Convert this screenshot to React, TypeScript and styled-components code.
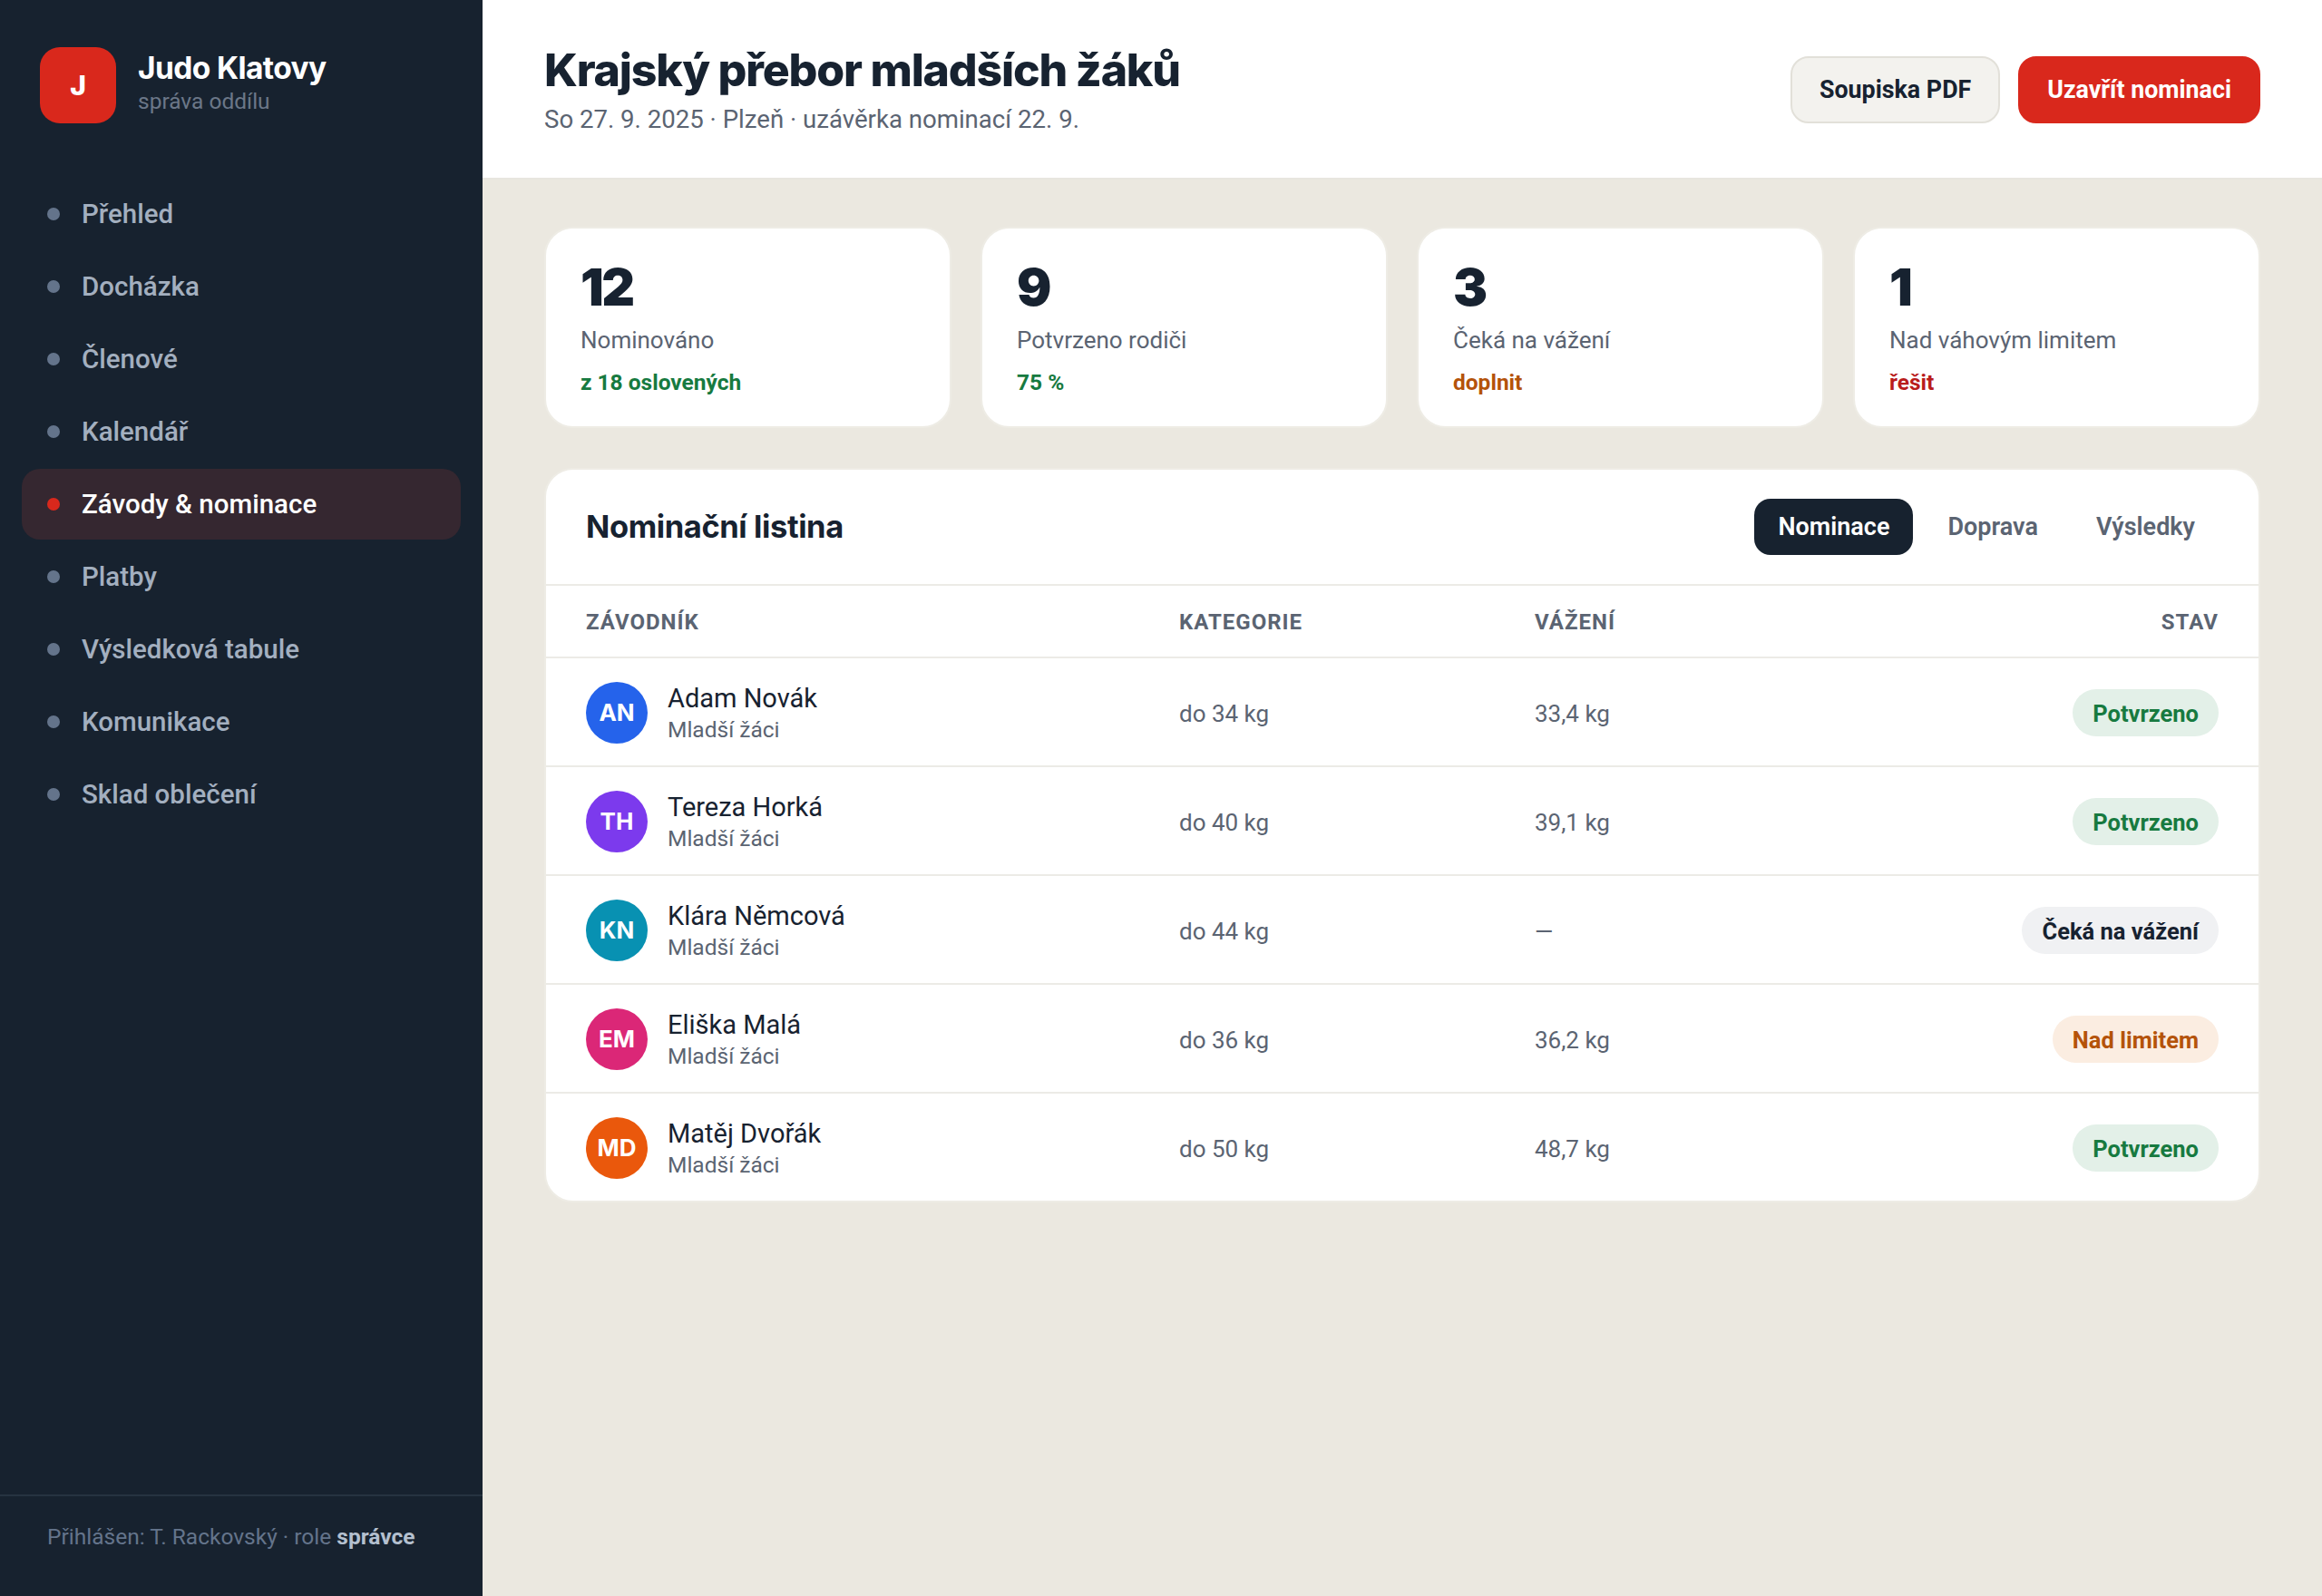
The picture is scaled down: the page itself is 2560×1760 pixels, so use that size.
import React from 'react';
import styled, { createGlobalStyle } from 'styled-components';

const GlobalStyle = createGlobalStyle`
  html, body {
    margin: 0;
    padding: 0;
    background: #ebe8e0;
  }
  * {
    box-sizing: border-box;
  }
  body {
    font-family: Roboto, "Noto Sans", sans-serif;
    color: #172230;
  }
`;

const Page = styled.div`
  display: flex;
  width: 100%;
  height: 100vh;
  min-height: 1760px;
`;

const Sidebar = styled.aside`
  width: 532px;
  flex: none;
  display: flex;
  flex-direction: column;
  background: #17222f;
`;

const Brand = styled.div`
  display: flex;
  align-items: center;
  gap: 24px;
  padding: 52px 44px 0;
`;

const Logo = styled.div`
  width: 84px;
  height: 84px;
  border-radius: 22px;
  background: #d9281c;
  color: #fff;
  display: flex;
  align-items: center;
  justify-content: center;
  font-family: Inter, sans-serif;
  font-weight: 800;
  font-size: 30px;
`;

const BrandText = styled.div`
  padding-bottom: 6px;
`;

const BrandName = styled.div`
  font-family: Inter, sans-serif;
  font-weight: 700;
  font-size: 33.5px;
  letter-spacing: -0.6px;
  line-height: 40px;
  color: #fff;
`;

const BrandSub = styled.div`
  margin-top: 2px;
  font-size: 24.5px;
  line-height: 30px;
  color: #6b7788;
`;

const Nav = styled.nav`
  display: flex;
  flex-direction: column;
  gap: 2px;
  padding: 61px 24px 0;
  flex: 1;
`;

const NavItem = styled.a<{ $active?: boolean }>`
  height: 78px;
  display: flex;
  align-items: center;
  gap: 24px;
  padding: 0 28px;
  border-radius: 20px;
  font-size: 29.5px;
  font-weight: 500;
  color: ${(p) => (p.$active ? '#fff' : '#a3afbf')};
  background: ${(p) => (p.$active ? '#352730' : 'transparent')};
`;

const NavDot = styled.span<{ $active?: boolean }>`
  width: 14px;
  height: 14px;
  border-radius: 50%;
  background: ${(p) => (p.$active ? '#d9281c' : '#64748b')};
`;

const SideFooter = styled.div`
  height: 112px;
  border-top: 2px solid #263341;
  padding: 0 52px 22px;
  display: flex;
  align-items: center;
  font-size: 24.5px;
  color: #64748b;
  white-space: nowrap;

  & b {
    font-weight: 700;
    color: #b4c0cf;
  }
`;

const Main = styled.main`
  flex: 1;
  min-width: 0;
  display: flex;
  flex-direction: column;
`;

const Header = styled.header`
  height: 198px;
  flex: none;
  display: flex;
  align-items: center;
  justify-content: space-between;
  padding: 0 68px;
  background: #fff;
  border-bottom: 2px solid #e8e6df;
`;

const Title = styled.h1`
  margin: 0;
  font-family: Inter, sans-serif;
  font-weight: 800;
  font-size: 50px;
  line-height: 62px;
  letter-spacing: -1.2px;
  color: #172230;
`;

const Subtitle = styled.div`
  margin-top: 6px;
  font-size: 27.6px;
  line-height: 36px;
  color: #5b6472;
`;

const Actions = styled.div`
  display: flex;
  gap: 20px;
  margin-top: 2px;
`;

const Button = styled.button<{ $primary?: boolean }>`
  height: 74px;
  padding: 0 30px;
  border-radius: 20px;
  font-family: inherit;
  font-size: 26.8px;
  font-weight: 700;
  border: 2px solid ${(p) => (p.$primary ? '#d9281c' : '#e2e0d9')};
  background: ${(p) => (p.$primary ? '#d9281c' : '#f3f2ee')};
  color: ${(p) => (p.$primary ? '#fff' : '#172230')};
`;

const Content = styled.div`
  flex: 1;
  display: flex;
  flex-direction: column;
  gap: 44px;
  padding: 52px 68px;
`;

const Stats = styled.div`
  display: grid;
  grid-template-columns: repeat(4, 1fr);
  gap: 32px;
`;

const StatCard = styled.div`
  height: 222px;
  padding: 32px 38px 0;
  background: #fff;
  border: 2px solid #eeece5;
  border-radius: 32px;
`;

const StatValue = styled.div`
  font-family: Inter, sans-serif;
  font-weight: 900;
  font-size: 57px;
  line-height: 66px;
  letter-spacing: -2.5px;
  color: #172230;
`;

const StatLabel = styled.div`
  margin-top: 5px;
  font-size: 26px;
  line-height: 40px;
  color: #5b6472;
`;

const tones = {
  green: '#177a40',
  orange: '#b4530a',
  red: '#b91c1c',
};

const StatNote = styled.div<{ $tone: keyof typeof tones }>`
  margin-top: 10px;
  font-size: 24.5px;
  line-height: 34px;
  font-weight: 700;
  color: ${(p) => tones[p.$tone]};
`;

const Panel = styled.section`
  background: #fff;
  border: 2px solid #eeece5;
  border-radius: 32px;
  overflow: hidden;
`;

const PanelHead = styled.div`
  height: 128px;
  display: flex;
  align-items: center;
  justify-content: space-between;
  padding: 0 44px;
  border-bottom: 2px solid #ecebe6;
`;

const PanelTitle = styled.h2`
  margin: -2px 0 0;
  font-family: Inter, sans-serif;
  font-weight: 700;
  font-size: 34.5px;
  letter-spacing: -0.4px;
`;

const Tabs = styled.div`
  display: flex;
  gap: 12px;
`;

const Tab = styled.div<{ $active?: boolean }>`
  height: 62px;
  display: flex;
  align-items: center;
  padding: 0 26px;
  border-radius: 18px;
  font-size: 27px;
  font-weight: 600;
  background: ${(p) => (p.$active ? '#17222f' : 'transparent')};
  color: ${(p) => (p.$active ? '#fff' : '#5b6472')};
`;

const Row = styled.div`
  display: grid;
  grid-template-columns: 654px 392px 1fr auto;
  align-items: center;
  padding: 2px 44px 0;
  height: 120px;
  border-bottom: 2px solid #ecebe6;

  &:last-child {
    height: 118px;
    border-bottom: 0;
  }
`;

const HeadRow = styled(Row)`
  height: 80px;
  font-size: 24px;
  font-weight: 700;
  letter-spacing: 1px;
  text-transform: uppercase;
  color: #5b6472;
`;

const Athlete = styled.div`
  display: flex;
  align-items: center;
  gap: 22px;
`;

const Avatar = styled.div<{ $color: string }>`
  width: 68px;
  height: 68px;
  border-radius: 50%;
  display: flex;
  align-items: center;
  justify-content: center;
  padding-bottom: 2px;
  background: ${(p) => p.$color};
  color: #fff;
  font-family: Inter, sans-serif;
  font-size: 26px;
  font-weight: 700;
`;

const Name = styled.div`
  font-size: 29px;
  line-height: 38px;
  color: #172230;
`;

const Group = styled.div`
  font-size: 24.5px;
  line-height: 32px;
  color: #5b6472;
`;

const Cell = styled.div`
  padding-top: 2px;
  font-size: 26px;
  color: #5b6472;
`;

const statuses = {
  ok: { bg: '#e3f0e8', fg: '#177a40' },
  wait: { bg: '#f0f1f3', fg: '#172230' },
  over: { bg: '#fbede1', fg: '#b4530a' },
};

const Pill = styled.span<{ $status: keyof typeof statuses }>`
  height: 52px;
  display: inline-flex;
  align-items: center;
  padding: 2px 22px 0;
  border-radius: 26px;
  font-size: 25.5px;
  font-weight: 700;
  background: ${(p) => statuses[p.$status].bg};
  color: ${(p) => statuses[p.$status].fg};
`;

const navItems = ['Přehled', 'Docházka', 'Členové', 'Kalendář', 'Závody & nominace', 'Platby', 'Výsledková tabule', 'Komunikace', 'Sklad oblečení'];

const stats = [
  { value: '12', label: 'Nominováno', note: 'z 18 oslovených', tone: 'green' as const },
  { value: '9', label: 'Potvrzeno rodiči', note: '75 %', tone: 'green' as const },
  { value: '3', label: 'Čeká na vážení', note: 'doplnit', tone: 'orange' as const },
  { value: '1', label: 'Nad váhovým limitem', note: 'řešit', tone: 'red' as const },
];

const athletes = [
  { initials: 'AN', color: '#2563eb', name: 'Adam Novák', cat: 'do 34 kg', weight: '33,4 kg', status: 'ok' as const, text: 'Potvrzeno' },
  { initials: 'TH', color: '#7c3aed', name: 'Tereza Horká', cat: 'do 40 kg', weight: '39,1 kg', status: 'ok' as const, text: 'Potvrzeno' },
  { initials: 'KN', color: '#0891b2', name: 'Klára Němcová', cat: 'do 44 kg', weight: '—', status: 'wait' as const, text: 'Čeká na vážení' },
  { initials: 'EM', color: '#db2777', name: 'Eliška Malá', cat: 'do 36 kg', weight: '36,2 kg', status: 'over' as const, text: 'Nad limitem' },
  { initials: 'MD', color: '#ea580c', name: 'Matěj Dvořák', cat: 'do 50 kg', weight: '48,7 kg', status: 'ok' as const, text: 'Potvrzeno' },
];

export default function App() {
  return (
    <Page>
      <GlobalStyle />
      <Sidebar>
        <Brand>
          <Logo>J</Logo>
          <BrandText>
            <BrandName>Judo Klatovy</BrandName>
            <BrandSub>správa oddílu</BrandSub>
          </BrandText>
        </Brand>
        <Nav>
          {navItems.map((item) => {
            const active = item === 'Závody & nominace';
            return (
              <NavItem key={item} $active={active}>
                <NavDot $active={active} />
                {item}
              </NavItem>
            );
          })}
        </Nav>
        <SideFooter>
          <div>
            Přihlášen: T. Rackovský · role <b>správce</b>
          </div>
        </SideFooter>
      </Sidebar>
      <Main>
        <Header>
          <div>
            <Title>Krajský přebor mladších žáků</Title>
            <Subtitle>So 27. 9. 2025 · Plzeň · uzávěrka nominací 22. 9.</Subtitle>
          </div>
          <Actions>
            <Button>Soupiska PDF</Button>
            <Button $primary>Uzavřít nominaci</Button>
          </Actions>
        </Header>
        <Content>
          <Stats>
            {stats.map((s) => (
              <StatCard key={s.label}>
                <StatValue>{s.value}</StatValue>
                <StatLabel>{s.label}</StatLabel>
                <StatNote $tone={s.tone}>{s.note}</StatNote>
              </StatCard>
            ))}
          </Stats>
          <Panel>
            <PanelHead>
              <PanelTitle>Nominační listina</PanelTitle>
              <Tabs>
                <Tab $active>Nominace</Tab>
                <Tab>Doprava</Tab>
                <Tab>Výsledky</Tab>
              </Tabs>
            </PanelHead>
            <HeadRow>
              <div>Závodník</div>
              <div>Kategorie</div>
              <div>Vážení</div>
              <div>Stav</div>
            </HeadRow>
            {athletes.map((a) => (
              <Row key={a.name}>
                <Athlete>
                  <Avatar $color={a.color}>{a.initials}</Avatar>
                  <div>
                    <Name>{a.name}</Name>
                    <Group>Mladší žáci</Group>
                  </div>
                </Athlete>
                <Cell>{a.cat}</Cell>
                <Cell>{a.weight}</Cell>
                <Pill $status={a.status}>{a.text}</Pill>
              </Row>
            ))}
          </Panel>
        </Content>
      </Main>
    </Page>
  );
}
